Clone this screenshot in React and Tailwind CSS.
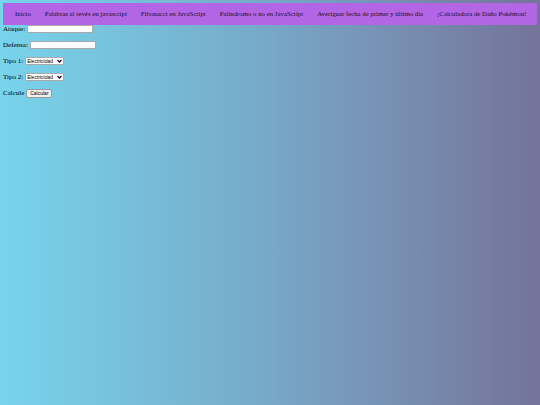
import React from 'react';

const links = [
    'Inicio',
    'Palabras al revés en javascript',
    'Fibonacci en JavaScript',
    'Palíndromo o no en JavaScript',
    'Averiguar fecha de primer y último día',
    '¡Calculadora de Daño Pokémon!',
];

const Chevron = () => (
    <svg width="5" height="4" viewBox="0 0 10 8">
        <path d="M1 2l4 4 4-4" fill="none" stroke="#111" strokeWidth="2.5" />
    </svg>
);

const FakeSelect = () => (
    <span className="ml-[2px] inline-flex items-center h-[8px] w-[39px] px-[1px] bg-white border border-[#aaa] rounded-[1px] text-[5px] leading-none text-black font-['Liberation_Sans',sans-serif]">
        <span className="flex-1">Electricidad</span>
        <Chevron />
    </span>
);

export default function App() {
    return (
        <div className="min-h-[405px] bg-gradient-to-r from-[#77d4eb] via-[#76a8c8] to-[#747399] font-['Liberation_Serif',serif] text-[7px] text-black pt-[3px]">
            <nav className="relative z-10 mx-[3px] h-[22px] bg-[#b266e6] flex items-center pl-[12px] gap-[14px] text-[6.8px] text-[#1c0c2c]">
                {links.map((l, i) => (
                    <a key={i} href="#" className="whitespace-nowrap">{l}</a>
                ))}
            </nav>
            <form className="-mt-[4px] px-[3px]" onSubmit={(e) => e.preventDefault()}>
                <div className="h-[16px] flex items-center">
                    Ataque:
                    <input className="ml-[2px] w-[66px] h-[8px] bg-white border border-[#aaa] outline-none" />
                </div>
                <div className="h-[16px] flex items-center">
                    Defensa:
                    <input className="ml-[2px] w-[66px] h-[8px] bg-white border border-[#aaa] outline-none" />
                </div>
                <div className="h-[16px] flex items-center">
                    Tipo 1:
                    <FakeSelect />
                </div>
                <div className="h-[16px] flex items-center">
                    Tipo 2:
                    <FakeSelect />
                </div>
                <div className="h-[16px] flex items-center">
                    Calcule
                    <button className="ml-[2px] h-[9px] w-[26px] bg-[#efefef] border border-[#999] rounded-[2px] text-[5px] leading-none font-['Liberation_Sans',sans-serif]">
                        Calcular
                    </button>
                </div>
            </form>
        </div>
    );
}
